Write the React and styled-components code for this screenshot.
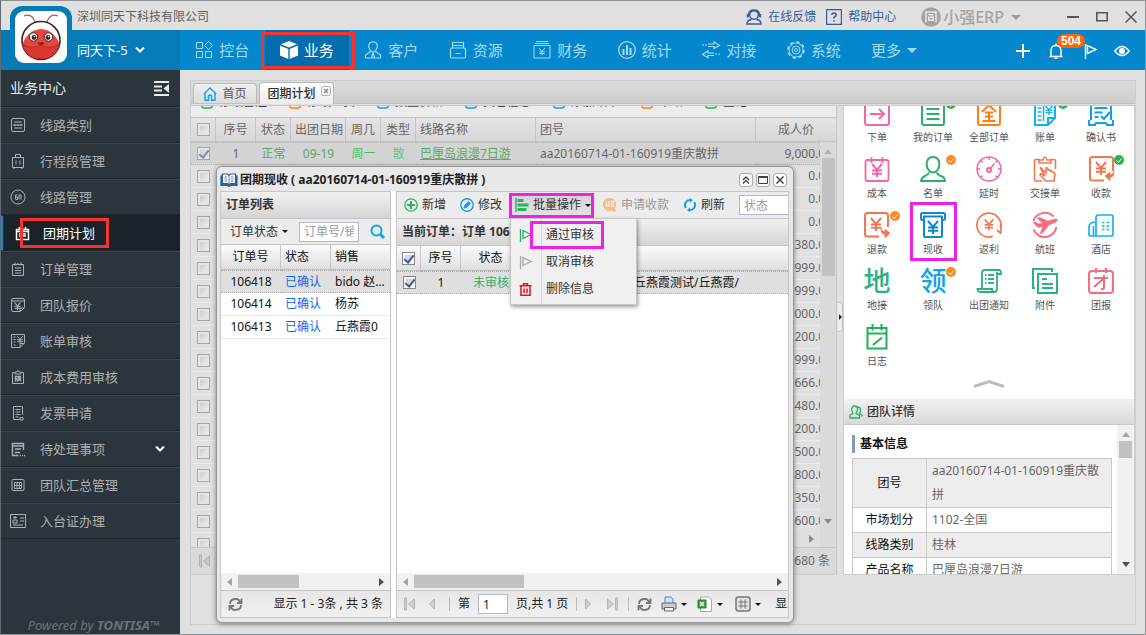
import React from 'react';
import styled, { createGlobalStyle, css } from 'styled-components';

const FONT = '"Noto Sans", "Noto Sans CJK SC", sans-serif';

const GlobalStyle = createGlobalStyle`
  * { box-sizing: border-box; }
  body {
    margin: 0;
    background: #e0e0e0;
    font-family: ${FONT};
    font-size: 12px;
    line-height: 16px;
    color: #333;
  }
  button, input { font: inherit; color: inherit; }
  button { border: 0; padding: 0; background: none; cursor: pointer; }
  svg { display: block; flex: none; overflow: visible; }
`;

/* ---------- shared parts ---------- */

const Mark = css`
  position: relative;
  &::after {
    content: '';
    position: absolute;
    inset: ${p => p.$inset || '0'};
    border: 3px solid ${p => p.$mark};
    pointer-events: none;
    z-index: 6;
  }
`;

const Svg = ({ size = 16, w, h, box, color = 'currentColor', sw = 1, children }) => (
  <svg
    width={w || size}
    height={h || size}
    viewBox={box || `0 0 ${w || size} ${h || size}`}
    fill="none"
    stroke={color}
    strokeWidth={sw}
    aria-hidden="true"
  >
    {children}
  </svg>
);

const Caret = styled.i`
  flex: none;
  width: 0;
  height: 0;
  border: ${p => p.$s || 3}px solid transparent;
  border-bottom: 0;
  border-top-color: ${p => p.$c || '#111'};
`;

const Arrow = styled.i`
  flex: none;
  width: 0;
  height: 0;
  border: 4px solid transparent;
  ${p => p.$to === 'left' && css`border-left: 0; border-right: 5px solid ${p.$c};`}
  ${p => p.$to === 'right' && css`border-right: 0; border-left: 5px solid ${p.$c};`}
  ${p => p.$to === 'up' && css`border-top: 0; border-bottom: 5px solid ${p.$c};`}
  ${p => p.$to === 'down' && css`border-bottom: 0; border-top: 5px solid ${p.$c};`}
`;

const Check = styled.input.attrs({ type: 'checkbox' })`
  appearance: none;
  display: block;
  position: relative;
  width: 13px;
  height: 13px;
  margin: 0 auto;
  border: 1px solid ${p => (p.$dim ? '#a4a7a9' : '#84888c')};
  background: linear-gradient(135deg, #bfc4c9, #f4f4f4);
  box-shadow: inset 0 0 0 2px ${p => (p.$dim ? '#e4e4e4' : '#fafafa')};
  &:checked::after {
    content: '';
    position: absolute;
    left: 3px;
    top: 0;
    width: 4px;
    height: 8px;
    border: solid ${p => (p.$dim ? '#8088b0' : '#41549c')};
    border-width: 0 2px 2px 0;
    transform: rotate(38deg);
  }
`;

const HTrack = styled.div`
  flex: none;
  display: flex;
  align-items: center;
  height: 17px;
  padding: 0 6px;
  gap: 6px;
  background: ${p => p.$bg || '#f1f1f1'};
`;
const HThumb = styled.div`
  width: ${p => p.$w}px;
  height: 13px;
  margin-right: auto;
  background: #c1c1c1;
`;
const VTrack = styled.div`
  flex: none;
  display: flex;
  flex-direction: column;
  align-items: center;
  width: ${p => p.$w || 17}px;
  padding: 7px 0 ${p => p.$end || 7}px;
  gap: 4px;
  background: ${p => p.$bg || '#f1f1f1'};
`;
const VThumb = styled.div`
  width: 13px;
  height: ${p => p.$h}px;
  margin-bottom: auto;
  background: ${p => p.$c || '#c1c1c1'};
`;

/* ---------- window and header ---------- */

const Shell = styled.div`
  position: relative;
  display: flex;
  flex-direction: column;
  height: 100vh;
  overflow: hidden;
  &::after {
    content: '';
    position: absolute;
    inset: 0;
    border: 1px solid #8f9295;
    border-left-color: #62696f;
    pointer-events: none;
    z-index: 20;
  }
`;

const Header = styled.header`
  flex: none;
  position: relative;
  height: 70px;
`;
const TitleBar = styled.div`
  display: flex;
  align-items: center;
  height: 30px;
  padding: 4px 9px 0 77px;
  color: #5e5e5e;
`;
const TitleTools = styled.div`
  margin-left: auto;
  display: flex;
  align-items: center;
`;
const HelpLink = styled.a`
  display: flex;
  align-items: center;
  gap: 6px;
  margin-right: 10px;
  color: #3b5998;
  text-decoration: none;
`;
const Brand = styled.button`
  display: flex;
  align-items: center;
  gap: 2px;
  margin: 0 46px 0 15px;
  color: #a3a3a3;
  line-height: 20px;
  i { margin-left: 5px; }
  b { font-weight: 500; font-size: 16px; }
`;
const WinButtons = styled.div`
  display: flex;
  gap: 17px;
  color: #555;
`;
const WinButton = styled.button`
  display: block;
`;

const NavRow = styled.div`
  display: flex;
  height: 40px;
  background: #0487cc;
`;
const Account = styled.button`
  flex: none;
  display: flex;
  align-items: center;
  gap: 7px;
  width: 180px;
  padding-left: 77px;
  background: #077ab8;
  color: #fff;
  font-size: 13px;
`;
const Logo = styled.div`
  position: absolute;
  left: 10px;
  top: 6px;
  width: 62px;
  height: 58px;
  padding: 5px;
  border-radius: 12px 12px 0 0;
  background: #077ab8;
  z-index: 2;
`;
const LogoFace = styled.div`
  width: 52px;
  height: 52px;
  border-radius: 9px;
  background: #fff;
`;
const Nav = styled.nav`
  display: grid;
  grid-template-columns: repeat(8, 1fr);
  width: 676px;
`;
const NavItem = styled.a`
  display: flex;
  align-items: center;
  justify-content: center;
  gap: 6px;
  font-size: 15px;
  text-decoration: none;
  color: ${p => (p.$mark ? '#fff' : '#a6daf2')};
  ${p => p.$mark && css`background: #036eae; ${Mark}`}
`;
const More = styled.button`
  display: flex;
  align-items: center;
  gap: 6px;
  margin-left: 15px;
  font-size: 15px;
  color: #a6daf2;
`;
const NavTools = styled.div`
  display: flex;
  align-items: center;
  gap: 17px;
  margin-left: auto;
  padding: 2px 16px 0 0;
  color: #fff;
`;
const NavTool = styled.button`
  position: relative;
`;
const Badge = styled.span`
  position: absolute;
  left: 9px;
  top: -9px;
  width: 28px;
  height: 14px;
  border-radius: 7px;
  background: #f60;
  font: bold 12px/14px "Liberation Sans", sans-serif;
  color: #fff;
  z-index: 1;
`;

/* ---------- sidebar ---------- */

const Body = styled.div`
  flex: 1;
  display: flex;
  min-height: 0;
`;
const Side = styled.aside`
  flex: none;
  display: flex;
  flex-direction: column;
  width: 180px;
  background: #2d353c;
`;
const SideTitle = styled.div`
  display: flex;
  align-items: center;
  justify-content: space-between;
  height: 37px;
  padding: 0 11px 0 10px;
  border-bottom: 1px solid #20272d;
  color: #e8eaeb;
  font-size: 14px;
`;
const SideItem = styled.a`
  display: flex;
  align-items: center;
  height: 36px;
  padding: 0 15px 0 10px;
  border-top: 1px solid #3b454d;
  border-bottom: 1px solid #20272d;
  color: #acb0b3;
  font-size: 13px;
  text-decoration: none;
  ${p => p.$on && css`
    padding-left: 12px;
    border-top-color: #1b2229;
    border-left: 3px solid #0c8fd6;
    background: #1b2229;
    color: #fff;
  `}
`;
const SideIcon = styled.span`
  flex: none;
  width: ${p => (p.$on ? 28 : 30)}px;
`;
const SideLabel = styled.span`
  margin-right: auto;
  ${p => p.$mark && Mark}
`;
const Powered = styled.div`
  margin: auto 20px 2px auto;
  color: #69727a;
  font-size: 13px;
  font-style: italic;
`;

/* ---------- workspace ---------- */

const Main = styled.main`
  flex: 1;
  display: flex;
  min-width: 0;
  padding: 10px;
`;
const Workspace = styled.div`
  flex: 1;
  position: relative;
  display: flex;
  flex-direction: column;
  min-width: 0;
  border: 1px solid #cdcdcd;
`;
const TabStrip = styled.div`
  flex: none;
  display: flex;
  align-items: flex-end;
  gap: 2px;
  height: 23px;
  padding-left: 2px;
  border-bottom: 1px solid #bfbfbf;
  background: linear-gradient(#dcdcdc, #cdcdcd);
`;
const Tab = styled.button`
  display: flex;
  align-items: center;
  justify-content: center;
  gap: 5px;
  height: ${p => (p.$on ? 22 : 20)}px;
  width: ${p => (p.$on ? 75 : 64)}px;
  margin-bottom: ${p => (p.$on ? -1 : 0)}px;
  border: 1px solid #b9b9b9;
  border-bottom: 0;
  border-radius: 4px 4px 0 0;
  background: ${p => (p.$on ? 'linear-gradient(#fff, #ececec)' : 'linear-gradient(#efefef, #dcdcdc)')};
  color: ${p => (p.$on ? '#333' : '#555')};
  font-weight: ${p => (p.$on ? 500 : 400)};
  svg:last-child { margin: -6px -5px 0 0; }
`;
const Content = styled.div`
  flex: 1;
  display: flex;
  min-height: 0;
  margin-top: 1px;
  padding-bottom: 49px;
  border-top: 1px solid #c8c8c8;
`;
const GridPane = styled.section`
  flex: 1;
  display: flex;
  flex-direction: column;
  min-width: 0;
  overflow: hidden;
  border-right: 1px solid #c8c8c8;
  border-bottom: 1px solid #cdcdcd;
  color: #666;
`;
const ToolClip = styled.div`
  flex: none;
  height: 11px;
  overflow: hidden;
  background: #ececec;
`;
const ToolRow = styled.div`
  display: flex;
  gap: 21px;
  margin-top: -12px;
  padding-left: 9px;
  white-space: nowrap;
`;
const ToolButton = styled.button`
  display: flex;
  align-items: center;
  gap: 5px;
  color: #444;
`;
const GridTable = styled.table`
  flex: none;
  width: 645px;
  table-layout: fixed;
  border-spacing: 0;
  line-height: 16px;
  th, td {
    height: 23px;
    padding: 0 4px;
    border-bottom: 1px solid #ebebeb;
    text-align: center;
    font-weight: 400;
    white-space: nowrap;
  }
  th {
    height: 25px;
    border: solid #c5c5c5;
    border-width: 1px 1px 1px 0;
    background: linear-gradient(#e4e4e4, #d6d6d6);
  }
  th:first-child, td:first-child { padding: 0; }
  th:nth-child(n + 7), td:nth-child(n + 7) { text-align: left; }
  th:last-child { text-align: center; border-right: 0; }
  td:last-child { text-align: right; }
`;
const GridRow = styled.tr`
  ${p => p.$on && css`
    background: #d3d3d3;
    td { border-top: 1px dotted #b4b4b4; border-bottom: 1px dotted #b4b4b4; }
  `}
`;
const Green = styled.span`
  color: ${p => p.$c || '#5ba864'};
`;
const GreenLink = styled.a`
  color: #5ba864;
`;
const GridBody = styled.div`
  flex: 1;
  display: flex;
  min-height: 0;
`;
const GridView = styled.div`
  flex: 1;
  overflow: hidden;
`;
const GridFoot = styled.div`
  flex: none;
  display: flex;
  align-items: center;
  justify-content: space-between;
  height: 27px;
  padding: 0 6px 0 8px;
  border-top: 1px solid #c8c8c8;
  background: #d9d9d9;
  color: #666;
`;
const EndTrack = styled(HTrack)`
  justify-content: flex-end;
  margin: -16px 16px 0 25px;
  height: 16px;
`;

const Splitter = styled.div`
  flex: none;
  display: flex;
  align-items: center;
  justify-content: flex-end;
  width: 6px;
`;
const SplitHandle = styled.button`
  display: flex;
  align-items: center;
  justify-content: flex-end;
  width: 5px;
  height: 30px;
  margin-bottom: 48px;
  border: 1px solid #c4c4c4;
  border-left: 0;
  border-radius: 0 4px 4px 0;
  background: #eee;
  i { border-width: 3px 0 3px 3px; }
`;

/* ---------- right side panel ---------- */

const SidePanel = styled.section`
  flex: none;
  display: flex;
  flex-direction: column;
  width: 292px;
  border: 1px solid #cdcdcd;
  border-top: 0;
  background: #fff;
`;
const ShortcutClip = styled.div`
  flex: none;
  overflow: hidden;
`;
const Shortcuts = styled.div`
  display: grid;
  grid-template-columns: repeat(5, 56px);
  grid-auto-rows: 56px;
  margin-top: -6px;
  padding-left: 5px;
`;
const Shortcut = styled.button`
  display: flex;
  flex-direction: column;
  align-items: center;
  gap: 4px;
  position: relative;
  color: #555;
  font-size: 10px;
  line-height: 14px;
  white-space: nowrap;
  ${p => p.$mark && Mark}
`;
const Dot = styled.span`
  position: absolute;
  right: 5px;
  top: -1px;
  display: flex;
  align-items: center;
  justify-content: center;
  width: 10px;
  height: 10px;
  border-radius: 50%;
  background: ${p => p.$c};
`;
const Collapse = styled.button`
  display: flex;
  justify-content: center;
  width: 100%;
  height: 19px;
`;
const PanelTitle = styled.div`
  flex: none;
  display: flex;
  align-items: center;
  gap: 4px;
  height: 26px;
  padding-left: 5px;
  border-bottom: 1px solid #c8c8c8;
  background: linear-gradient(#f0f0f0, #d9d9d9);
  color: #333;
  font-weight: 500;
`;
const Detail = styled.div`
  flex: 1;
  display: flex;
  min-height: 0;
`;
const DetailView = styled.div`
  flex: 1;
  overflow: hidden;
  padding: 10px 5px 0 8px;
`;
const DetailTitle = styled.h3`
  margin: 0 0 5px;
  padding-left: 5px;
  border-left: 3px solid #7b98c8;
  color: #111;
  font-size: 12px;
  font-weight: 700;
  line-height: 18px;
`;
const DetailTable = styled.table`
  width: 100%;
  border-collapse: collapse;
  line-height: 24px;
  th, td { border: 1px solid #c8c8c8; padding: 0 5px; word-break: break-all; }
  th { width: 74px; padding: 0; color: #111; font-weight: 400; }
  td { color: #666; }
  tr:nth-child(odd) { background: #ededed; }
`;

/* ---------- dialog ---------- */

const Dialog = styled.section`
  position: absolute;
  left: 25px;
  top: 85px;
  display: flex;
  flex-direction: column;
  width: 578px;
  height: 457px;
  padding: 0 4px 4px 3px;
  border: 1px solid #979797;
  border-radius: 6px;
  background: #e8e8e8;
  box-shadow: 0 1px 5px rgba(0, 0, 0, 0.45);
`;
const DialogHead = styled.div`
  flex: none;
  display: flex;
  align-items: center;
  gap: 3px;
  height: 24px;
  padding: 2px 2px 0 1px;
  color: #222;
`;
const DialogTitle = styled.h2`
  margin: 0 auto 0 0;
  font-size: 12px;
  font-weight: 700;
  white-space: pre;
`;
const DialogButton = styled.button`
  display: flex;
  align-items: center;
  justify-content: center;
  width: 14px;
  height: 14px;
  border: 1px solid #aaa;
  border-radius: 3px;
  background: #fafafa;
`;
const Panels = styled.div`
  flex: 1;
  display: flex;
  gap: 5px;
  min-height: 0;
  background: #fff;
`;
const Panel = styled.div`
  ${p => (p.$w ? css`flex: none; width: ${p.$w}px;` : css`flex: 1;`)}
  display: flex;
  flex-direction: column;
  min-width: 0;
  overflow: hidden;
  border: 1px solid #c4c4c4;
  background: #fff;
`;
const Heading = styled.div`
  flex: none;
  display: flex;
  align-items: center;
  height: 27px;
  padding: 0 5px;
  border-bottom: 1px solid #c4c4c4;
  background: linear-gradient(#f0f0f0, #d5d5d5);
  color: #333;
  font-weight: 700;
  white-space: nowrap;
`;
const FilterBar = styled.div`
  flex: none;
  display: flex;
  align-items: center;
  justify-content: space-between;
  height: 26px;
  padding: 0 5px 0 9px;
  border-bottom: 1px solid #c4c4c4;
  background: #ececec;
`;
const DropButton = styled.button`
  display: flex;
  align-items: center;
  gap: 4px;
`;
const TextBox = styled.input`
  width: ${p => p.$w}px;
  height: 20px;
  padding: 0 4px;
  border: 1px solid #b5b8c8;
  border-radius: 0;
  background: #fff;
  &::placeholder { color: #999; opacity: 1; }
`;
const ActionBar = styled.div`
  flex: none;
  display: flex;
  align-items: center;
  height: 27px;
  padding-left: 7px;
  border-bottom: 1px solid #c4c4c4;
  background: #ececec;
`;
const Action = styled.button`
  flex: none;
  display: flex;
  align-items: center;
  gap: 4px;
  margin-right: 14px;
  color: #333;
  &:disabled { color: #999; }
`;
const BatchWrap = styled.div`
  flex: none;
  position: relative;
  width: 84px;
  height: 25px;
  margin: 0 9px 0 -6px;
  ${Mark}
`;
const BatchButton = styled.button`
  display: flex;
  align-items: center;
  gap: 4px;
  width: 100%;
  height: 25px;
  padding-left: 5px;
  border-right: 1px solid #aaa;
  background: linear-gradient(#d2d2d2, #e4e4e4);
`;
const Menu = styled.div`
  position: absolute;
  left: 0;
  top: 25px;
  width: 127px;
  padding: 3px 0 1px;
  border: 1px solid #c6c6c6;
  background: linear-gradient(90deg, #f0f0f0 30px, #d9d9d9 30px, #d9d9d9 31px, #f0f0f0 31px);
  box-shadow: 1px 2px 4px rgba(0, 0, 0, 0.4);
  z-index: 5;
`;
const MenuItem = styled.button`
  display: flex;
  align-items: center;
  width: 100%;
  height: 27px;
  padding-left: 8px;
`;
const MenuText = styled.span`
  margin-left: 14px;
  padding: 5px 0;
  ${p => p.$mark && Mark}
`;
const ListTable = styled.table`
  width: ${p => p.$w || '100%'};
  table-layout: fixed;
  border-spacing: 0;
  color: #111;
  th, td {
    height: 23px;
    padding: 0 4px;
    border-bottom: 1px solid #ebebeb;
    font-weight: 400;
    text-align: ${p => p.$align};
    white-space: nowrap;
    overflow: hidden;
    text-overflow: ellipsis;
  }
  th {
    height: 25px;
    border-right: 1px solid #c8c8c8;
    border-bottom: 1px solid #bdbdbd;
    background: linear-gradient(#fafafa, #dfdfe0);
  }
  th:last-child { border-right: 0; }
  th:first-child, td:first-child { padding: 0; text-align: center; }
`;
const ListRow = styled.tr`
  ${p => p.$on && css`
    background: #dfdfdf;
    td { border-top: 1px dotted #aaa; border-bottom: 1px dotted #aaa; }
  `}
`;
const NameCell = styled.td`
  && { text-align: left; }
`;
const State = styled.span`
  color: ${p => p.$c};
`;
const Spacer = styled.div`
  flex: 1;
`;
const Pager = styled.div`
  flex: none;
  display: flex;
  align-items: center;
  height: 27px;
  padding: 0 7px;
  border-top: 1px solid #c4c4c4;
  background: linear-gradient(#e6e6e6, #f0f0f0);
  color: #222;
  white-space: nowrap;
`;
const PagerItem = styled.button`
  flex: none;
  display: flex;
  align-items: center;
  gap: 4px;
  margin-right: ${p => p.$r || 8}px;
`;
const PagerText = styled.label`
  flex: none;
  margin-right: 8px;
`;
const PagerSum = styled.span`
  margin-left: auto;
  white-space: pre;
`;
const Line = styled.i`
  flex: none;
  width: 1px;
  height: 14px;
  margin-right: 8px;
  background: #bbb;
`;
const PageBox = styled(TextBox)`
  flex: none;
  margin-right: 8px;
`;

/* ---------- drawings ---------- */

const Yen = ({ x = 13, y = 13, k = 1 }) => (
  <path
    transform={`translate(${x} ${y}) scale(${k})`}
    d="M-5 -6L0 0L5 -6M0 0V7M-5 0.5H5M-5 3.8H5"
  />
);

const Glyph = ({ x = 13, y, size, children }) => (
  <text
    x={x}
    y={y}
    fontSize={size}
    textAnchor="middle"
    fill="currentColor"
    stroke="none"
    fontFamily="Noto Sans CJK SC"
    fontWeight="500"
  >
    {children}
  </text>
);

const bug = (
  <svg width="52" height="52" viewBox="0 0 52 52" fill="none" aria-hidden="true">
    <path d="M9 5Q19 1 21.500 17M43 5Q33 1 30.500 17" stroke="#8a6a66" strokeWidth="1.2" />
    <circle cx="26" cy="29.500" r="19" fill="#fff" stroke="#3a2325" strokeWidth="1.6" />
    <path d="M7.500 33Q13 19 26 18Q39 19 44.500 33Q41 48 26 48Q11 48 7.500 33Z" fill="#e8453e" />
    <path d="M7.500 33Q16 39 26 34Q36 39 44.500 33Q41 48 26 48Q11 48 7.500 33Z" fill="#dc3832" stroke="#a32826" strokeWidth="0.8" />
    <circle cx="18.500" cy="26" r="4.200" fill="#fff" stroke="#3a2325" />
    <circle cx="33.500" cy="26" r="4.200" fill="#fff" stroke="#3a2325" />
    <circle cx="19" cy="26.500" r="2.400" fill="#3a2325" />
    <circle cx="33" cy="26.500" r="2.400" fill="#3a2325" />
    <circle cx="19.500" cy="25.500" r="0.800" fill="#fff" />
    <circle cx="33.500" cy="25.500" r="0.800" fill="#fff" />
    <path d="M22 32Q26 30.500 30 32Q26 36 22 32Z" fill="#8e1f1f" />
  </svg>
);

const navItems = [
  ['控台', <Svg size={18}><path d="M1.500 1.500h6v6h-6zM1.500 10.500h6v6h-6zM10.500 10.500h6v6h-6zM13.500 .5l4 4-4 4-4-4z" /></Svg>],
  ['业务', <Svg size={18}><path d="M9 0L17 3.200L9 6.600L1 3.200ZM0 4.600L8.300 8V18L0 14.500ZM18 4.600L9.700 8V18L18 14.500Z" fill="currentColor" stroke="none" /></Svg>, true],
  ['客户', <Svg size={18} sw={1.200}><path d="M9 .8c3 0 4.300 2 4.300 4.500S11 11 9 11 4.700 7.800 4.700 5.300 6 .8 9 .8zM6.500 10.500L1.500 14v3h15v-3l-5-3.500M9 11.500l-1.500 5M9 11.500l1.500 5" /></Svg>],
  ['资源', <Svg size={18} sw={1.200}><path d="M3.500 7V1.500h11V7M3.500 4.500h11M1.500 8.500q0-1.500 1.500-1.500h12q1.500 0 1.500 1.500v7q0 1.500-1.500 1.500H3q-1.500 0-1.500-1.500zM6.500 12.500h5" /></Svg>],
  ['财务', <Svg size={18}><path d="M3 .5h12M2 2.500h14M1 4.500h16v12.500H1z" /><g strokeWidth="1.800"><Yen x={9} y={10.500} k={0.550} /></g></Svg>],
  ['统计', <Svg size={18} sw={1.300}><circle cx="9" cy="9" r="8.300" /><path d="M5.500 8v6M9 4v10M12.500 7v7" strokeWidth="2" /></Svg>],
  ['对接', <Svg size={18} sw={1.200}><path d="M0 4h2M3 4h2M6 3h6V.8L17.500 4.500 12 7.500V5.500H6M18 13h-2M15 13h-2M12 12H6v-2.200L.5 13.500 6 16.700V14.500h6" /></Svg>],
  ['系统', <Svg size={18}><circle cx="9" cy="9" r="8" strokeWidth="1.600" strokeDasharray="3.500 2.780" /><circle cx="9" cy="9" r="7" /><circle cx="9" cy="9" r="4" /><circle cx="9" cy="9" r="1.500" /></Svg>],
];

const sideItems = [
  ['线路类别', <path d="M3 1.500h10q1.500 0 1.500 1.500v10q0 1.500-1.500 1.500H3q-1.500 0-1.500-1.500V3q0-1.500 1.500-1.500zM4 5h8M3 8h10M4 11h8M5 7v2M8 7v2M11 7v2" />],
  ['行程段管理', <path d="M2.500 4.500h11v10h-11zM5.500 4.500v-3h5v3M6 7.500v4M10 7.500v4M4 14.500v1.500M12 14.500v1.500" />],
  ['线路管理', <><circle cx="8" cy="8" r="7" /><path d="M7.500 6h-2v4M5.500 8h2v2.500h-2M9 10.500V6h2v4.500" /></>],
  ['团期计划', <path d="M1.500 4.500h12v10h-12zM1.500 6.500h12M4.500 2v2.500M10.500 2v2.500M4 9h7M4 11h7" strokeWidth="1.500" />],
  ['订单管理', <path d="M2.500 3.500h11v11h-11zM5 1.500v3M11 1.500v3M8 2v2M5 7h6M5 9.500h6M5 12h6" />],
  ['团队报价', <><path d="M14.500 10V3q0-1.500-1.500-1.500H3q-1.500 0-1.500 1.500v10q0 1.500 1.500 1.500h7M1.500 4h13M10 14.500v-3.500h4.500z" /><g strokeWidth="1.800"><Yen x={7.500} y={9} k={0.600} /></g></>],
  ['账单审核', <><path d="M14.500 10V1.500h-13v13H10zM10 14.500V10.500h4.500M3.500 4h2M3.500 6.500h2M3.500 9h2M3.500 12h2" /><g strokeWidth="1.800"><Yen x={10} y={6.500} k={0.550} /></g></>],
  ['成本费用审核', <><path d="M4.500 3.500h-2v11h11v-11h-2M5 5V3h2q1-3 2 0h2v2z" /><path d="M5 7.500h6M5.500 7.500v5M7.500 7l3.500 5M11 8.500L7 12.500M5.500 10h2.500" strokeWidth="1.400" /></>],
  ['发票申请', <path d="M12.500 10V1.500h-9v13h6M5.500 4.500h5M5.500 7h5M5.500 9.500h5M5.500 12h3M10 12.500h3v2.500h-3z" />],
  ['待处理事项', <path d="M13.500 9V2.500h-11v12h6M2.500 5h11M5 8h6M5 11.500h5M10 14.500h1M12 14.500h1M14 14.500h1" strokeWidth="1.400" />, true],
  ['团队汇总管理', <path d="M3 2.500h10q1 0 1 1v9q0 1-1 1H3q-1 0-1-1v-9q0-1 1-1zM4.500 5.500h7v6h-7zM4.500 8.500h7M7 5.500v6M9.500 5.500v6" />],
  ['入台证办理', <path d="M.5 1.500h15v13H.5zM10 5h4M10 8h4M3 12h10M3 4.500h4M5 3v3M3 7h4v3H3z" />],
];

const PINK = '#f066a8';
const GREEN = '#2fae6a';
const TEAL = '#2db084';
const ORANGE = '#ff7f0e';
const CORAL = '#f2784b';
const BLUE = '#0f87cf';
const SKY = '#12a0ea';
const CYAN = '#10b4ec';
const ROSE = '#f26d7d';

const docEdge = 'M24 15V3.500q0-2.500-2.500-2.500h-18Q1 1 1 3.500v18.500Q1 24.500 3.500 24.500H15';

const shortcuts = [
  ['下单', PINK, <path d="M3.500 1h19Q25 1 25 3.500v19q0 2.500-2.500 2.500h-19Q1 25 1 22.500v-19Q1 1 3.500 1zM6 14h14M15 9l5 5-5 5" />],
  ['我的订单', GREEN, <path d="M4 1h18q2 0 2 2v20q0 2-2 2H4q-2 0-2-2V3q0-2 2-2zM6.500 9h13M6.500 14h13M6.500 19h13" />, '#2fae4a'],
  ['全部订单', ORANGE, <><path d="M4 1h18q2 0 2 2v20q0 2-2 2H4q-2 0-2-2V3q0-2 2-2z" /><path d="M13 5L6 12M13 5l7 7M9 12.500h8M9 16.500h8M6.500 21h13M13 12.500V21" /></>],
  ['账单', CYAN, <><path d="M23 18V1H3v24h13zM16 25v-7h7" /><path d="M5.500 8h4M5.500 12h4M5.500 16h4M5.500 20h4M11.500 6v15" strokeWidth="1.500" /><Yen x={17} y={10} k={0.700} /></>, '#2fae4a'],
  ['确认书', SKY, <path d="M3 20V1h20v19M1 20v5h6q0-2 2-2h8q2 0 2 2h6v-5M6.500 8h13M6.500 12.500h8M6.500 17h4M13 16l3 3 6-7" />],
  ['成本', PINK, <><path d="M3.500 4h19q2 0 2 2v17q0 2-2 2h-19q-2 0-2-2V6q0-2 2-2zM7.500 1v6M18.500 1v6" strokeWidth="1.800" /><Yen y={14} /></>],
  ['名单', GREEN, <path d="M13 1c4.500 0 6.300 3.200 6.300 7.500S16.500 16.500 13 16.500 6.700 12.800 6.700 8.500 8.500 1 13 1zM9 16.500q-1 2.500-4 3.500T1 25h24q-.500-4-4-5t-4-3.500" />, '#ff8a1c'],
  ['延时', PINK, <><circle cx="13" cy="13" r="12" strokeWidth="1.500" /><circle cx="13" cy="14" r="2" /><path d="M14.500 12.500L18.500 7.500M13 1v3M1 13h3M22 13h3M4.500 4.500l2 2M21.500 4.500l-2 2M4.500 21.500l2-2M21.500 21.500l-2-2" strokeWidth="1.500" /></>],
  ['交接单', CORAL, <path d="M8 3.500H4q-1.500 0-1.500 1.500v18.500Q2.500 25 4 25h6M18 3.500h4q1.500 0 1.500 1.500v8M7 7V4h4q2-6 4 0h4v3zM8 11l6 6V12q2-1 2 2 2-1 2 1 2-1 2 1 3 0 3 3l-1 6h-8l-6-6q0-2 2-1l3 2z" strokeWidth="1.600" />],
  ['收款', CORAL, <><path d={docEdge} transform="translate(1 0)" /><Yen y={12} /><path d="M17 20l5-4v2.500q4-.500 3.500-4 2 6-3.500 7V25z" fill="currentColor" strokeWidth="0.500" /></>, '#2fae4a'],
  ['退款', '#ee7650', <><path d={docEdge} /><Yen x={12} y={12} /><path d="M26 21l-5-4v2.500q-4-.500-3.500-4-2 6 3.500 7V26z" fill="currentColor" strokeWidth="0.500" /></>, '#ff8a1c'],
  ['现收', BLUE, <><path d="M4 8H2.500Q1 8 1 6.500v-4Q1 1 2.500 1h21Q25 1 25 2.500v4Q25 8 23.500 8H22M4 4.500h18v19q0 1.500-1.500 1.500h-15Q4 25 4 23.500z" /><Yen y={15} /></>, null, true],
  ['返利', CORAL, <><path d="M17 24.300A12 12 0 1 1 24.500 16M25 11.500v10M25 21.500l-4-3.500" strokeWidth="1.700" /><Yen y={12.500} k={0.850} /></>],
  ['航班', ROSE, <><path d="M21.500 4.500A12 12 0 0 0 1.500 9M1.500 17.500A12 12 0 0 0 24.500 15" /><path d="M1 10.500l2-.500 4 2 3.500-1L5 6l3-.500 8 3.500 6.500-2q3-.500 3 1T22 11l-5 2-6.500 8-2.500.500 3-7-5 1z" fill="currentColor" strokeWidth="0.500" /></>],
  ['酒店', CYAN, <><path d="M8 24V5.500Q8 3 10.500 3h13Q25 3 25 5v17q0 2-2 2H3q-2 0-2-2v-7q0-5 7-5M5.500 14v10" strokeWidth="1.700" /><path d="M14 10.500h2.500M18.500 10.500h2.500M14 14h2.500M18.500 14h2.500M14 17.500h2.500M18.500 17.500h2.500" strokeWidth="1.500" /></>],
  ['地接', TEAL, <Glyph y={23} size={27}>地</Glyph>],
  ['领队', SKY, <Glyph y={23} size={27}>领</Glyph>, '#ff8a1c'],
  ['出团通知', TEAL, <path d="M6 21V5q0-3 3-3h14q2 0 2 4h-4M21 4v17q0 3-3 3H4q-2.500 0-2.500-3H16q0 3 2 3M9 7h1.500M12 7h6M9 11h1.500M12 11h6M9 15h1.500M12 15h6" strokeWidth="1.800" />],
  ['附件', TEAL, <path d="M3 20H1V1h19v3M6 6h19v19H6zM10 11h5M10 16h11M10 20h11" />],
  ['团报', ROSE, <path d="M4 3h18q3 0 3 3v16q0 3-3 3H4q-3 0-3-3V6q0-3 3-3zM8 0v5M18 0v5M6 10h14M16 7v13q0 1-3 1M15 11L6 19" />],
  ['日志', '#22b05a', <path d="M3.500 4h19v20.500h-19zM3.500 9.500h19M8.500 0v6.500M17.500 0v6.500M18 13.500L9 21" />],
];

const pageTools = [
  ['修改备注', '#2fae6a'], ['修改人员', '#ff7f0e'], ['数量价格', '#12a0ea'], ['其它信息', '#12a0ea'],
  ['添加缺单', '#12a0ea'], ['未结', '#ff7f0e'], ['登记', '#2fae6a'],
];

const columns = [
  [25], [40, '序号'], [35, '状态'], [55, '出团日期'], [35, '周几'], [35, '类型'],
  [120, '线路名称'], [220, '团号'], [80, '成人价'],
];

const prices = [
  '0.00', '0.00', '0.00', '380.00', '999.00', '999.00', '000.00', '200.00', '999.00',
  '666.00', '480.00', '200.00', '500.00', '800.00', '350.00', '600.00', '',
];

const orders = [
  ['106418', 'bido 赵小强'],
  ['106414', '杨苏'],
  ['106413', '丘燕霞0'],
];

const details = [
  ['团号', 'aa20160714-01-160919重庆散拼'],
  ['市场划分', '1102-全国'],
  ['线路类别', '桂林'],
  ['产品名称', '巴厘岛浪漫7日游'],
];

const refreshIcon = (
  <Svg size={15} color="#777" sw={1.800}>
    <path d="M2 7q0-5 6-5 3 0 4 3M13.500 1.500V6H9M13 8q0 5-6 5-3 0-4-3M1.500 13.500V9H6" />
  </Svg>
);

const flag = color => (
  <Svg size={13} color={color} sw={1.300}><path d="M1.500 0v13M4 1.500v8L12 5.500z" /></Svg>
);

/* ---------- sections ---------- */

function TopBar() {
  return (
    <Header>
      <TitleBar>
        深圳同天下科技有限公司
        <TitleTools>
          <HelpLink href="#feedback">
            <Svg size={16} color="#3b5998" sw={1.400}>
              <circle cx="8" cy="6" r="4.300" /><path d="M2.500 8V5.500Q3 1 8 1t5.500 4.500V8M1.500 5v3.500M14.500 5v3.500M5.500 10.500Q1 11 1 15h14q0-4-4.500-4.500" />
            </Svg>
            在线反馈
          </HelpLink>
          <HelpLink href="#help">
            <Svg size={16} color="#3b5998" sw={1.200}>
              <path d="M.6 .6h14.800v14.800H.6z" /><path d="M5.800 6q0-2 2.200-2t2.200 2q0 1.200-2.200 2.500v1M8 11v1.500" strokeWidth="1.500" />
            </Svg>
            帮助中心
          </HelpLink>
          <Brand>
            <Svg size={20} sw={1.500}>
              <circle cx="10" cy="10" r="9.800" fill="currentColor" stroke="none" />
              <path d="M5 15.500V5h10v10.500M7.500 7.800h5M7.800 10.200h4.400v3H7.800z" stroke="#e6e6e6" />
            </Svg>
            <b>小强ERP</b>
            <Caret $s={5} $c="#9a9a9a" />
          </Brand>
          <WinButtons>
            <WinButton aria-label="最小化"><Svg size={12} sw={2}><path d="M0 6h12" /></Svg></WinButton>
            <WinButton aria-label="最大化"><Svg size={12} sw={1.600}><path d="M.8 1.800h10.400v8H.8z" /></Svg></WinButton>
            <WinButton aria-label="关闭"><Svg size={12} sw={1.500}><path d="M.5 .5l11 11M11.500 .5l-11 11" /></Svg></WinButton>
          </WinButtons>
        </TitleTools>
      </TitleBar>
      <NavRow>
        <Account>
          同天下-5
          <Svg w={10} h={6} sw={2}><path d="M1 .5l4 4 4-4" /></Svg>
        </Account>
        <Nav>
          {navItems.map(([name, icon, on]) => (
            <NavItem key={name} href="#nav" $mark={on && '#f4342e'} $inset="2px -6px 1px -4px">
              {icon}
              {name}
            </NavItem>
          ))}
        </Nav>
        <More>更多<Caret $s={5} $c="#a6daf2" /></More>
        <NavTools>
          <NavTool aria-label="新建"><Svg size={16} sw={2}><path d="M8 1v14M1 8h14" /></Svg></NavTool>
          <NavTool aria-label="消息">
            <Svg size={16} sw={1.400}><path d="M1.500 13.500h13M3 13V8q0-5.500 5-5.500T13 8v5M8 .5v2M6.500 15.300h3" /></Svg>
            <Badge>504</Badge>
          </NavTool>
          <NavTool aria-label="标记"><Svg size={16} sw={1.400}><path d="M4.500 1v15M6.500 2.500v8L15 6.500z" /></Svg></NavTool>
          <NavTool aria-label="查看">
            <Svg size={16} sw={1.400}><path d="M.8 8Q8-1 15.200 8 8 17 .8 8z" /><circle cx="8" cy="8" r="2.300" fill="currentColor" /></Svg>
          </NavTool>
        </NavTools>
      </NavRow>
      <Logo><LogoFace>{bug}</LogoFace></Logo>
    </Header>
  );
}

function Sidebar() {
  return (
    <Side>
      <SideTitle>
        业务中心
        <Svg size={15} sw={2}><path d="M0 1h15M0 5.500h8M0 9.500h8M0 14h15" /><path d="M15 3v9L9.500 7.500z" fill="currentColor" stroke="none" /></Svg>
      </SideTitle>
      {sideItems.map(([name, icon, more], i) => (
        <SideItem key={name} href="#menu" $on={i === 3}>
          <SideIcon $on={i === 3}><Svg>{icon}</Svg></SideIcon>
          <SideLabel $mark={i === 3 && '#f4342e'} $inset="-7px -14px -7px -23px">{name}</SideLabel>
          {more && <Svg w={10} h={6} sw={2} color="#fff"><path d="M1 .5l4 4 4-4" /></Svg>}
        </SideItem>
      ))}
      <Powered>Powered by <b>TONTISA</b>™</Powered>
    </Side>
  );
}

const Cols = ({ list }) => (
  <colgroup>{list.map(([w], i) => <col key={i} width={w} />)}</colgroup>
);

function PlanGrid() {
  return (
    <GridPane>
      <ToolClip>
        <ToolRow>
          {pageTools.map(([name, color]) => (
            <ToolButton key={name}>
              <Svg size={14} color={color} sw={1.600}><path d="M2 1h10v10q0 2-2 2H4q-2 0-2-2z" /></Svg>
              {name}
            </ToolButton>
          ))}
        </ToolRow>
      </ToolClip>
      <GridTable>
        <Cols list={columns} />
        <thead>
          <tr>
            {columns.map(([, name], i) => <th key={i}>{name || <Check $dim aria-label="全选" />}</th>)}
          </tr>
        </thead>
      </GridTable>
      <GridBody>
        <GridView>
          <GridTable>
            <Cols list={columns} />
            <tbody>
              <GridRow $on>
                <td><Check $dim defaultChecked aria-label="选择 1" /></td>
                <td>1</td>
                <td><Green>正常</Green></td>
                <td><Green>09-19</Green></td>
                <td><Green $c="#4cc25a">周一</Green></td>
                <td><Green $c="#6cc08c">散</Green></td>
                <td><GreenLink href="#line">巴厘岛浪漫7日游</GreenLink></td>
                <td>aa20160714-01-160919重庆散拼</td>
                <td>9,000.00</td>
              </GridRow>
              {prices.map((price, i) => (
                <GridRow key={i}>
                  <td><Check $dim aria-label={`选择 ${i + 2}`} /></td>
                  <td colSpan={7} />
                  <td>{price}</td>
                </GridRow>
              ))}
            </tbody>
          </GridTable>
        </GridView>
        <VTrack $bg="#dadada" $w={16} $end={23}>
          <Arrow $to="up" $c="#b5b5b5" />
          <VThumb $h={118} $c="#c2c2c2" />
          <Arrow $to="down" $c="#8b8b8b" />
        </VTrack>
      </GridBody>
      <EndTrack $bg="#dedede"><Arrow $to="right" $c="#8b8b8b" /></EndTrack>
      <GridFoot>
        <Svg w={11} h={12}><path d="M.5 0h2v12h-2z" fill="#c6c6c6" stroke="#b0b0b0" /><path d="M10.500 1v10L4.500 6z" fill="#c6c6c6" stroke="#b0b0b0" /></Svg>
        <span>680 条</span>
      </GridFoot>
    </GridPane>
  );
}

function InfoPanel() {
  return (
    <SidePanel>
      <ShortcutClip>
        <Shortcuts>
          {shortcuts.map(([name, color, icon, dot, on]) => (
            <Shortcut key={name} $mark={on && '#f01fe8'} $inset="-10px 4px 7px 5px">
              <svg width="26" height="26" viewBox="0 0 26 26" fill="none" stroke="currentColor" strokeWidth="2" color={color} aria-hidden="true">
                {icon}
              </svg>
              {name}
              {dot && <Dot $c={dot}><Svg w={6} h={5} color="#fff"><path d="M.5 2.500l2 2 3-4" /></Svg></Dot>}
            </Shortcut>
          ))}
        </Shortcuts>
      </ShortcutClip>
      <Collapse aria-label="收起">
        <Svg w={30} h={8} color="#bcbcbc" sw={3}><path d="M0 6.500L15 1.500 30 6.500" /></Svg>
      </Collapse>
      <PanelTitle>
        <Svg size={14} color="#2fae6a" sw={1.300}><path d="M5.500 1c2 0 3 1.500 3 3.500S7 8 7 8.500t3.500 2V13H1v-2q0-1.500 3-2.500 0-.500-1-2.500T3.500 2 5.500 1zM8.500 2q3 0 3 3T10.500 8t2.500 2v1.500" /></Svg>
        团队详情
      </PanelTitle>
      <Detail>
        <DetailView>
          <DetailTitle>基本信息</DetailTitle>
          <DetailTable>
            <tbody>
              {details.map(([k, v]) => (
                <tr key={k}><th scope="row">{k}</th><td>{v}</td></tr>
              ))}
            </tbody>
          </DetailTable>
        </DetailView>
        <VTrack>
          <Arrow $to="up" $c="#a3a3a3" />
          <VThumb $h={17} />
          <Arrow $to="down" $c="#505050" />
        </VTrack>
      </Detail>
    </SidePanel>
  );
}

function OrderList() {
  const cols = [[60], [50], [59]];
  return (
    <Panel $w={171}>
      <Heading>订单列表</Heading>
      <FilterBar>
        <DropButton>订单状态<Caret /></DropButton>
        <TextBox $w={60} placeholder="订单号/销售" aria-label="订单号/销售" />
        <Svg size={15} color="#12a0ea" sw={2}><circle cx="6.500" cy="6.500" r="5" /><path d="M10 10l4 4" strokeWidth="3" /></Svg>
      </FilterBar>
      <ListTable $align="left">
        <Cols list={cols} />
        <thead><tr><th>订单号</th><th>状态</th><th>销售</th></tr></thead>
        <tbody>
          {orders.map(([id, seller], i) => (
            <ListRow key={id} $on={i === 0}>
              <td>{id}</td><td><State $c="#1464f0">已确认</State></td><td>{seller}</td>
            </ListRow>
          ))}
        </tbody>
      </ListTable>
      <Spacer />
      <HTrack>
        <Arrow $to="left" $c="#a3a3a3" /><HThumb $w={61} /><Arrow $to="right" $c="#505050" />
      </HTrack>
      <Pager>
        {refreshIcon}
        <PagerSum>显示 1 - 3条 , 共 3 条</PagerSum>
      </Pager>
    </Panel>
  );
}

function Receipts() {
  const cols = [[24], [40], [60], [109], [200]];
  return (
    <Panel>
      <ActionBar>
        <Action>
          <Svg size={14} color="#2fae6a" sw={1.300}><circle cx="7" cy="7" r="6.200" /><path d="M7 3v8M3 7h8" strokeWidth="2" /></Svg>
          新增
        </Action>
        <Action>
          <Svg size={14} color="#12a0ea" sw={1.400}><circle cx="7" cy="7" r="6.200" /><path d="M4 10l.5-2.500 4-4 2 2-4 4z" fill="#12a0ea" strokeWidth="1" /></Svg>
          修改
        </Action>
        <BatchWrap $mark="#f01fe8" $inset="0 0 0 -1px">
          <BatchButton>
            <Svg size={14} color="#2fae6a" sw={3}><path d="M1 0v14" strokeWidth="1.400" /><path d="M2.500 2.500h6M2.500 7h11M2.500 11.500h9" /></Svg>
            批量操作
            <Caret />
          </BatchButton>
          <Menu>
            <MenuItem>{flag('#2fae6a')}<MenuText $mark="#f01fe8" $inset="-1px -10px -1px -16px">通过审核</MenuText></MenuItem>
            <MenuItem>{flag('#a8a8a8')}<MenuText>取消审核</MenuText></MenuItem>
            <MenuItem>
              <Svg size={13} color="#e81010" sw={1.500}><path d="M.5 2.800h12M4.500 2.500V.8h4v1.700M2 3v9.200h9V3M5 5.500v4.500M8 5.500v4.500" /></Svg>
              <MenuText>删除信息</MenuText>
            </MenuItem>
          </Menu>
        </BatchWrap>
        <Action disabled>
          <Svg size={14} color="#f3bd8c" sw={1.300}><circle cx="6.500" cy="6.500" r="6" fill="#f3bd8c" /><path d="M3.500 4v4l2-1M6 3v6M8 3.500h3L8 9M8 5l3 4" stroke="#ececec" /><path d="M9 12h4M11 10v4" strokeWidth="2" /></Svg>
          申请收款
        </Action>
        <Action>
          <Svg size={14} color="#12a0ea" sw={2}><path d="M2.800 10A5.200 5.200 0 0 1 8 2M11.200 4A5.200 5.200 0 0 1 6 12" /><path d="M7 0l3 2.200L7 4.500zM7 9.500v4.500L4 12z" fill="#12a0ea" stroke="none" /></Svg>
          刷新
        </Action>
        <TextBox $w={80} placeholder="状态" aria-label="状态" />
      </ActionBar>
      <Heading>当前订单：订单 106418</Heading>
      <ListTable $w="433px" $align="center">
        <Cols list={cols} />
        <thead>
          <tr><th><Check defaultChecked aria-label="全选收款" /></th><th>序号</th><th>状态</th><th /><th /></tr>
        </thead>
        <tbody>
          <ListRow $on>
            <td><Check defaultChecked aria-label="选择收款 1" /></td>
            <td>1</td>
            <td><State $c="#2fae6a">未审核</State></td>
            <td />
            <NameCell>丘燕霞测试/丘燕霞/</NameCell>
          </ListRow>
        </tbody>
      </ListTable>
      <Spacer />
      <HTrack>
        <Arrow $to="left" $c="#a3a3a3" /><HThumb $w={110} /><Arrow $to="right" $c="#505050" />
      </HTrack>
      <Pager>
        <PagerItem $r={14} aria-label="首页"><Svg w={11} h={12}><path d="M.5 0h2v12h-2zM10.500 1v10L4.500 6z" fill="#d0d0d0" stroke="#b5b5b5" /></Svg></PagerItem>
        <PagerItem $r={14} aria-label="上一页"><Svg w={6} h={12}><path d="M5.500 1v10L.5 6z" fill="#d0d0d0" stroke="#b5b5b5" /></Svg></PagerItem>
        <Line />
        <PagerText htmlFor="page">第</PagerText>
        <PageBox id="page" $w={30} defaultValue="1" />
        <PagerText as="span">页,共 1 页</PagerText>
        <Line />
        <PagerItem $r={16} aria-label="下一页"><Svg w={6} h={12}><path d="M.5 1v10l5-5z" fill="#d0d0d0" stroke="#b5b5b5" /></Svg></PagerItem>
        <PagerItem $r={10} aria-label="末页"><Svg w={11} h={12}><path d="M8.500 0h2v12h-2zM.5 1v10l6-5z" fill="#d0d0d0" stroke="#b5b5b5" /></Svg></PagerItem>
        <Line />
        <PagerItem $r={9} aria-label="刷新">{refreshIcon}</PagerItem>
        <PagerItem $r={10} aria-label="打印">
          <Svg size={16} color="#666"><path d="M4 7V1h6l2 2v4" fill="#cfe4fa" stroke="#4a86c8" /><path d="M1 7h14v6H1z" fill="#c9ccd0" /><path d="M3.500 11.500h9v3.500h-9z" fill="#eef3f8" /></Svg>
          <Caret />
        </PagerItem>
        <PagerItem $r={12} aria-label="导出">
          <Svg size={16} color="#a8a8a8"><path d="M3.500 1h8l3 3v11.500h-11z" fill="#fff" /><path d="M1 4h8v8H1z" fill="#3f9a3c" stroke="#2c7a2b" /><path d="M3 6l4 4M7 6l-4 4" stroke="#fff" strokeWidth="1.400" /></Svg>
          <Caret />
        </PagerItem>
        <PagerItem $r={14} aria-label="列数">
          <Svg size={16} color="#777"><rect x="1" y="1" width="14" height="14" rx="2.500" fill="#e2e2e2" strokeWidth="1.500" /><path d="M6 3.500v9M10 3.500v9M3.500 6h9M3.500 10h9" /></Svg>
          <Caret />
        </PagerItem>
        显示
      </Pager>
    </Panel>
  );
}

function ReceiptDialog() {
  return (
    <Dialog role="dialog" aria-label="团期现收">
      <DialogHead>
        <Svg size={16} color="#2b5f93" sw={1.200}>
          <path d="M0 3.500v10h7l1 1 1-1h7v-10" fill="#2b6aa8" /><path d="M1.500 2H6.500L8 3.200 9.500 2h5v9.500h-5L8 12.700 6.500 11.500h-5z" fill="#fff" /><path d="M8 3v9.500M3.500 5h2.500M3.500 7h2.500M3.500 9h2.500M10 5h2.500M10 7h2.500M10 9h2.500" strokeWidth="0.800" />
        </Svg>
        <DialogTitle>团期现收 ( aa20160714-01-160919重庆散拼 )</DialogTitle>
        <DialogButton aria-label="折叠"><Svg size={8} color="#444" sw={1.300}><path d="M1 4l3-3 3 3M1 7.500l3-3 3 3" /></Svg></DialogButton>
        <DialogButton aria-label="最大化"><Svg size={10} color="#444"><path d="M.5 2h9v6.500h-9z" /><path d="M0 2h10" strokeWidth="2" /></Svg></DialogButton>
        <DialogButton aria-label="关闭"><Svg size={8} color="#444" sw={1.500}><path d="M.5 .5l7 7M7.500 .5l-7 7" /></Svg></DialogButton>
      </DialogHead>
      <Panels>
        <OrderList />
        <Receipts />
      </Panels>
    </Dialog>
  );
}

export default function App() {
  return (
    <Shell>
      <GlobalStyle />
      <TopBar />
      <Body>
        <Sidebar />
        <Main>
          <Workspace>
            <TabStrip>
              <Tab>
                <Svg size={14} color="#12a0ea" sw={1.400}><path d="M.8 7L7 1l6.200 6M2 6v7.200h3.500V9q1.500-2 3 0v4.200H12V6" /></Svg>
                <span>首页</span>
              </Tab>
              <Tab $on>
                <span>团期计划</span>
                <Svg size={10} color="#8a8a8a" sw={1.500}><rect x="0.500" y="0.500" width="9" height="9" rx="2" strokeWidth="1" stroke="#b0b0b0" /><path d="M3 3l4 4M7 3L3 7" /></Svg>
              </Tab>
            </TabStrip>
            <Content>
              <PlanGrid />
              <Splitter><SplitHandle aria-label="折叠面板"><Arrow $to="right" $c="#222" /></SplitHandle></Splitter>
              <InfoPanel />
            </Content>
            <ReceiptDialog />
          </Workspace>
        </Main>
      </Body>
    </Shell>
  );
}
